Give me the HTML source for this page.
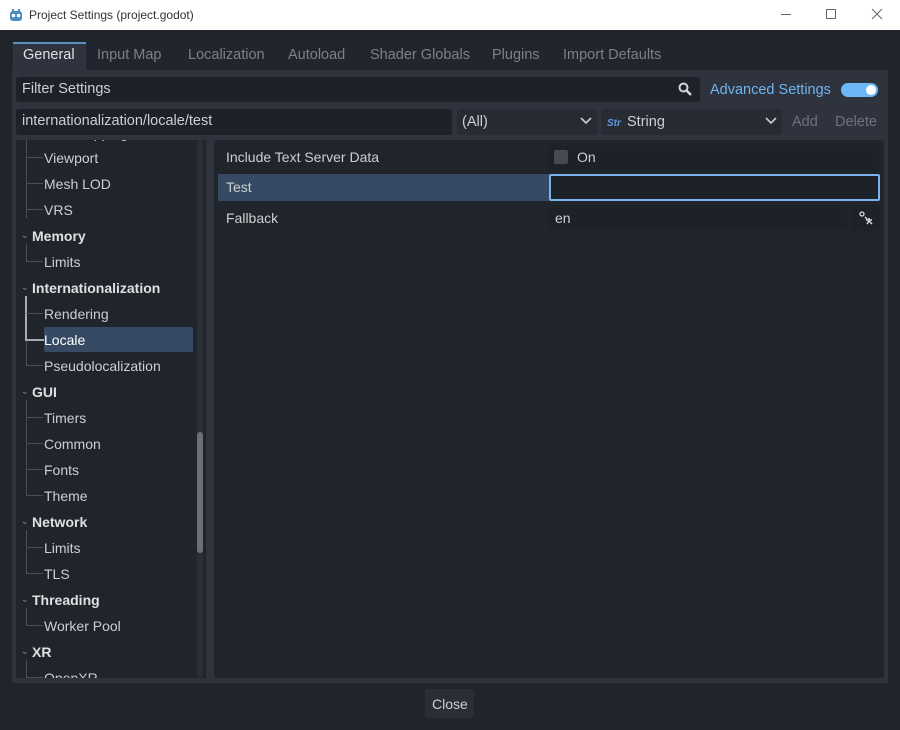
<!DOCTYPE html>
<html><head><meta charset="utf-8"><style>
*{margin:0;padding:0;box-sizing:border-box}
body{width:900px;height:730px;background:#20242b;font-family:"Liberation Sans",sans-serif;font-size:14px;color:#cdcfd2;position:relative;overflow:hidden}
.a{position:absolute}
.t{position:absolute;white-space:nowrap;line-height:18px}
.tb{position:absolute;top:0;left:0;width:900px;height:30px;background:#fff;color:#444;font-size:12px}
.tab{position:absolute;top:47px;color:#7d8087;font-size:14.5px}
.tree .t{color:#cdcfd2;margin-top:1px}
.cat{font-weight:bold;color:#dfe0e2 !important}
.hl{position:absolute;height:1px;background:#4a4e56}
.vl{position:absolute;width:1px;background:#4a4e56}
.arr{position:absolute;font-size:9px;color:#8a8d93}
</style></head><body>
<div class="tb">
  <svg class="a" style="left:9px;top:8px" width="14" height="14" viewBox="0 0 14 14"><rect x="1" y="3" width="12" height="10" rx="3" fill="#478cbf"/><circle cx="4.5" cy="7.5" r="1.8" fill="#fff"/><circle cx="9.5" cy="7.5" r="1.8" fill="#fff"/><rect x="3" y="1" width="2" height="3" fill="#478cbf"/><rect x="9" y="1" width="2" height="3" fill="#478cbf"/></svg>
  <div class="t" style="left:29px;top:6px;color:#333">Project Settings (project.godot)</div>
  <div class="a" style="left:781px;top:14px;width:10px;height:1px;background:#666"></div>
  <div class="a" style="left:826px;top:9px;width:10px;height:10px;border:1px solid #666"></div>
  <svg class="a" style="left:871px;top:8px" width="12" height="12"><path d="M1 1L11 11M11 1L1 11" stroke="#666" stroke-width="1"/></svg>
</div>
<div class="a" style="left:12px;top:42px;width:876px;height:28px;background:#21252d"></div>
<div class="a" style="left:13px;top:42px;width:73px;height:28px;background:#2e333e;border-top:2px solid #5b8fc4"></div>
<div class="tab" style="left:23px;color:#dfe0e2">General</div>
<div class="tab" style="left:97px">Input Map</div>
<div class="tab" style="left:188px">Localization</div>
<div class="tab" style="left:288px">Autoload</div>
<div class="tab" style="left:370px">Shader Globals</div>
<div class="tab" style="left:492px">Plugins</div>
<div class="tab" style="left:563px">Import Defaults</div>
<div class="a" style="left:12px;top:70px;width:876px;height:613px;background:#2e333e"></div>
<div class="a" style="left:16px;top:77px;width:684px;height:25px;background:#1d2128;border-radius:3px"></div>
<div class="t" style="left:22px;top:80px;font-size:14.5px">Filter Settings</div>
<svg class="a" style="left:678px;top:82px" width="14" height="14"><circle cx="5.5" cy="5.5" r="4" stroke="#d6d7d9" stroke-width="2" fill="none"/><path d="M8.5 8.5L13 13" stroke="#d6d7d9" stroke-width="2.4"/></svg>
<div class="t" style="left:710px;top:81px;color:#6fb5f0;font-size:14.5px">Advanced Settings</div>
<div class="a" style="left:841px;top:83px;width:37px;height:14px;border-radius:7px;background:#6cb7f5"></div>
<div class="a" style="left:866px;top:85px;width:10px;height:10px;border-radius:5px;background:#fff"></div>
<div class="a" style="left:16px;top:109px;width:436px;height:26px;background:#1d2128;border-radius:3px"></div>
<div class="t" style="left:22px;top:112px;font-size:14.5px">internationalization/locale/test</div>
<div class="a" style="left:457px;top:109px;width:140px;height:26px;background:#272b34;border-radius:3px"></div>
<div class="t" style="left:462px;top:113px;font-size:14.5px">(All)</div>
<svg class="a" style="left:580px;top:117px" width="12" height="8"><path d="M1 1L6 6L11 1" stroke="#ccc" stroke-width="1.6" fill="none"/></svg>
<div class="a" style="left:601px;top:109px;width:181px;height:26px;background:#272b34;border-radius:3px"></div>
<div class="t" style="left:607px;top:115px;font-size:10px;font-style:italic;font-weight:bold;color:#5d9be0">Str</div>
<div class="t" style="left:627px;top:113px;font-size:14.5px">String</div>
<svg class="a" style="left:765px;top:117px" width="12" height="8"><path d="M1 1L6 6L11 1" stroke="#ccc" stroke-width="1.6" fill="none"/></svg>
<div class="t" style="left:792px;top:113px;color:#6f737a;font-size:14.5px">Add</div>
<div class="t" style="left:835px;top:113px;color:#6f737a;font-size:14.5px">Delete</div>
<div class="a tree" style="left:16px;top:140px;width:190px;height:538px;background:#20242b;overflow:hidden">
  <div class="a" style="left:181px;top:0;width:6px;height:538px;background:#2a2e37;border-radius:3px"></div>
  <div class="a" style="left:181px;top:292px;width:6px;height:121px;background:#6b6f78;border-radius:3px"></div>
  <div class="t" style="left:28px;top:-17px">Tonemapping</div>
  <div class="vl" style="left:10px;top:0;height:78px"></div>
  <div class="hl" style="left:10px;top:17px;width:17px"></div><div class="t" style="left:28px;top:8px">Viewport</div>
  <div class="hl" style="left:10px;top:43px;width:17px"></div><div class="t" style="left:28px;top:34px">Mesh LOD</div>
  <div class="hl" style="left:10px;top:69px;width:17px"></div><div class="t" style="left:28px;top:60px">VRS</div>
  <div class="arr" style="left:5px;top:90px">&#8964;</div><div class="t cat" style="left:16px;top:86px">Memory</div>
  <div class="vl" style="left:10px;top:104px;height:17px"></div>
  <div class="hl" style="left:10px;top:121px;width:17px"></div><div class="t" style="left:28px;top:112px">Limits</div>
  <div class="arr" style="left:5px;top:142px">&#8964;</div><div class="t cat" style="left:16px;top:138px">Internationalization</div>
  <div class="vl" style="left:10px;top:156px;height:69px"></div>
  <div class="a" style="left:9px;top:156px;width:2px;height:44px;background:#a8abb0"></div>
  <div class="a" style="left:9px;top:199px;width:19px;height:2px;background:#a8abb0"></div>
  <div class="hl" style="left:10px;top:173px;width:17px"></div><div class="t" style="left:28px;top:164px">Rendering</div>
  <div class="a" style="left:28px;top:187px;width:149px;height:25px;background:#364b63;border-radius:2px"></div>
  <div class="t" style="left:28px;top:190px;color:#fff">Locale</div>
  <div class="hl" style="left:10px;top:225px;width:17px"></div><div class="t" style="left:28px;top:216px">Pseudolocalization</div>
  <div class="arr" style="left:5px;top:246px">&#8964;</div><div class="t cat" style="left:16px;top:242px">GUI</div>
  <div class="vl" style="left:10px;top:260px;height:95px"></div>
  <div class="hl" style="left:10px;top:277px;width:17px"></div><div class="t" style="left:28px;top:268px">Timers</div>
  <div class="hl" style="left:10px;top:303px;width:17px"></div><div class="t" style="left:28px;top:294px">Common</div>
  <div class="hl" style="left:10px;top:329px;width:17px"></div><div class="t" style="left:28px;top:320px">Fonts</div>
  <div class="hl" style="left:10px;top:355px;width:17px"></div><div class="t" style="left:28px;top:346px">Theme</div>
  <div class="arr" style="left:5px;top:376px">&#8964;</div><div class="t cat" style="left:16px;top:372px">Network</div>
  <div class="vl" style="left:10px;top:390px;height:43px"></div>
  <div class="hl" style="left:10px;top:407px;width:17px"></div><div class="t" style="left:28px;top:398px">Limits</div>
  <div class="hl" style="left:10px;top:433px;width:17px"></div><div class="t" style="left:28px;top:424px">TLS</div>
  <div class="arr" style="left:5px;top:454px">&#8964;</div><div class="t cat" style="left:16px;top:450px">Threading</div>
  <div class="vl" style="left:10px;top:468px;height:17px"></div>
  <div class="hl" style="left:10px;top:485px;width:17px"></div><div class="t" style="left:28px;top:476px">Worker Pool</div>
  <div class="arr" style="left:5px;top:506px">&#8964;</div><div class="t cat" style="left:16px;top:502px">XR</div>
  <div class="vl" style="left:10px;top:520px;height:17px"></div>
  <div class="hl" style="left:10px;top:537px;width:17px"></div><div class="t" style="left:28px;top:528px">OpenXR</div>
</div>
<div class="a" style="left:214px;top:140px;width:670px;height:538px;background:#20242b;border-radius:3px"></div>
<div class="a" style="left:549px;top:145px;width:330px;height:25px;background:#1d2128"></div>
<div class="t" style="left:226px;top:148px">Include Text Server Data</div>
<div class="a" style="left:554px;top:150px;width:14px;height:14px;background:#454a53;border-radius:2px"></div>
<div class="t" style="left:577px;top:148px">On</div>
<div class="a" style="left:218px;top:174px;width:331px;height:27px;background:#364b63"></div>
<div class="t" style="left:226px;top:178px">Test</div>
<div class="a" style="left:549px;top:174px;width:331px;height:27px;background:#1d2128;border:2px solid #78b4ea;border-radius:2px"></div>
<div class="t" style="left:226px;top:209px">Fallback</div>
<div class="a" style="left:549px;top:205px;width:298px;height:25px;background:#1d2128"></div>
<div class="t" style="left:555px;top:209px">en</div>
<div class="a" style="left:852px;top:205px;width:28px;height:25px;background:#1d2128"></div>
<svg class="a" style="left:859px;top:211px" width="14" height="14"><circle cx="3" cy="3" r="2" stroke="#ddd" stroke-width="1.3" fill="none"/><path d="M6 6L8 8M7 9h6M10 7v3M8 13l2-3 3 3" stroke="#ddd" stroke-width="1.5" fill="none"/></svg>
<div class="a" style="left:425px;top:689px;width:49px;height:29px;background:#2a2e37;border-radius:3px"></div>
<div class="t" style="left:432px;top:695px">Close</div>
</body></html>
